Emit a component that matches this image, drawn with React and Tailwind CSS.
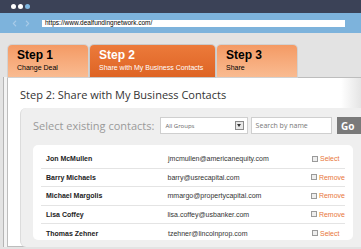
import { FaChevronLeft, FaChevronRight } from "react-icons/fa";

const contacts = [
  { name: "Jon McMullen", email: "jmcmullen@americanequity.com", action: "Select" },
  { name: "Barry Michaels", email: "barry@usrecapital.com", action: "Remove" },
  { name: "Michael Margolis", email: "mmargo@propertycapital.com", action: "Remove" },
  { name: "Lisa Coffey", email: "lisa.coffey@usbanker.com", action: "Remove" },
  { name: "Thomas Zehner", email: "tzehner@lincolnprop.com", action: "Select" },
];

const Tab = ({ title, sub, active }) => (
  <div
    className={
      active
        ? "w-[125px] h-[32px] rounded-t-[4px] bg-gradient-to-b from-[#ec7a3a] to-[#de6424] text-white px-[9px] pt-[4px] leading-none shadow-[0_0_0_1px_#c9c9c9] whitespace-nowrap"
        : "w-[80px] h-[32px] rounded-t-[4px] bg-gradient-to-b from-[#f49a64] to-[#f9bb91] text-black px-[9px] pt-[4px] leading-none shadow-[0_0_0_1px_#d2d2d2] whitespace-nowrap"
    }
  >
    <div className="text-[12px] font-bold font-['Liberation_Sans',Arial,sans-serif]">{title}</div>
    <div className="text-[7px] mt-[3px] font-['Liberation_Sans',Arial,sans-serif]">{sub}</div>
  </div>
);

const App = () => {
  return (
    <div className="w-[361px] h-[249px] overflow-hidden bg-[#e3e3e3] font-['Open_Sans',sans-serif]">
      {/* browser chrome */}
      <div className="h-[13px] bg-[#3b4257] flex items-center gap-[2px] pl-[11px]">
        <div className="w-[5px] h-[5px] rounded-full bg-white" />
        <div className="w-[5px] h-[5px] rounded-full bg-white" />
        <div className="w-[5px] h-[5px] rounded-full bg-[#7fb6e0]" />
      </div>
      <div className="h-[20px] bg-[#7db3dc] flex items-center pl-[11px] pr-[16px]">
        <FaChevronLeft className="text-[#a8cbe8] text-[7px]" />
        <FaChevronRight className="text-[#a8cbe8] text-[7px] ml-[6px]" />
        <div className="ml-[11px] flex-1 h-[7px] bg-white flex items-center pl-[3px] text-[6.5px] leading-none text-black font-['Liberation_Sans',Arial,sans-serif]">
          https://www.dealfundingnetwork.com/
        </div>
      </div>

      {/* steps */}
      <div className="pt-[12px] pl-[8px] flex gap-[2px]">
        <Tab title="Step 1" sub="Change Deal" />
        <Tab title="Step 2" sub="Share with My Business Contacts" active />
        <Tab title="Step 3" sub="Share" />
      </div>

      {/* content */}
      <div className="ml-[7px] w-[360px] h-[170px] border border-[#bdbdbd] bg-gradient-to-r from-white from-[93%] to-[#dedede] shadow-[-3px_0_0_#f3f3f3,-4px_0_0_#b5b5b5]">
        <div className="pl-[12px] pt-[11px] text-[11px] text-[#333] leading-none">
          Step 2: Share with My Business Contacts
        </div>
        <div className="ml-[12px] mt-[8px] h-[139px] bg-[#efefef] rounded-tl-[6px] rounded-bl-[6px] border-l border-[#dcdcdc] pl-[12px] pt-[9px]">
          <div className="flex items-center h-[17px]">
            <div className="text-[11px] text-[#9a9a9a] w-[132px] leading-none">Select existing contacts:</div>
            <div className="w-[90px] h-[17px] bg-white border border-[#cfcfcf] flex items-center justify-between pl-[4px] pr-[3px]">
              <span className="text-[6px] text-[#666] leading-none">All Groups</span>
              <span className="w-[9px] h-[9px] border border-[#8a8a8a] bg-[#e8e8e8] flex items-center justify-center">
                <span className="w-0 h-0 border-l-[2px] border-r-[2px] border-t-[3px] border-l-transparent border-r-transparent border-t-[#333]" />
              </span>
            </div>
            <div className="ml-[3px] w-[84px] h-[17px] bg-white border border-[#cfcfcf] flex items-center pl-[4px]">
              <span className="text-[7px] text-[#777] leading-none">Search by name</span>
            </div>
            <div className="ml-[5px] w-[30px] h-[17px] bg-[#7a7a7a] text-white text-[10px] font-bold flex items-center pl-[4px] leading-none">
              Go
            </div>
          </div>
          <div className="mt-[11px] w-[320px] h-[95px] bg-white rounded-[5px] px-[8px] pt-[5px]">
            {contacts.map((c, i) => (
              <div
                key={c.name}
                className={
                  "flex items-center h-[18.5px] text-[7px] leading-none font-['Liberation_Sans',Tahoma,sans-serif] " +
                  (i < contacts.length - 1 ? "border-b border-[#e4e4e4]" : "")
                }
              >
                <div className="w-[127px] pl-[5px] font-bold text-[#222]">{c.name}</div>
                <div className="w-[144px] text-[#333]">{c.email}</div>
                <div className="flex items-center gap-[2px] text-[#e8763a]">
                  <span className="w-[6px] h-[6px] border border-[#9a9a9a] bg-[#eee]" />
                  {c.action}
                </div>
              </div>
            ))}
          </div>
        </div>
      </div>
    </div>
  );
};

export default App;
